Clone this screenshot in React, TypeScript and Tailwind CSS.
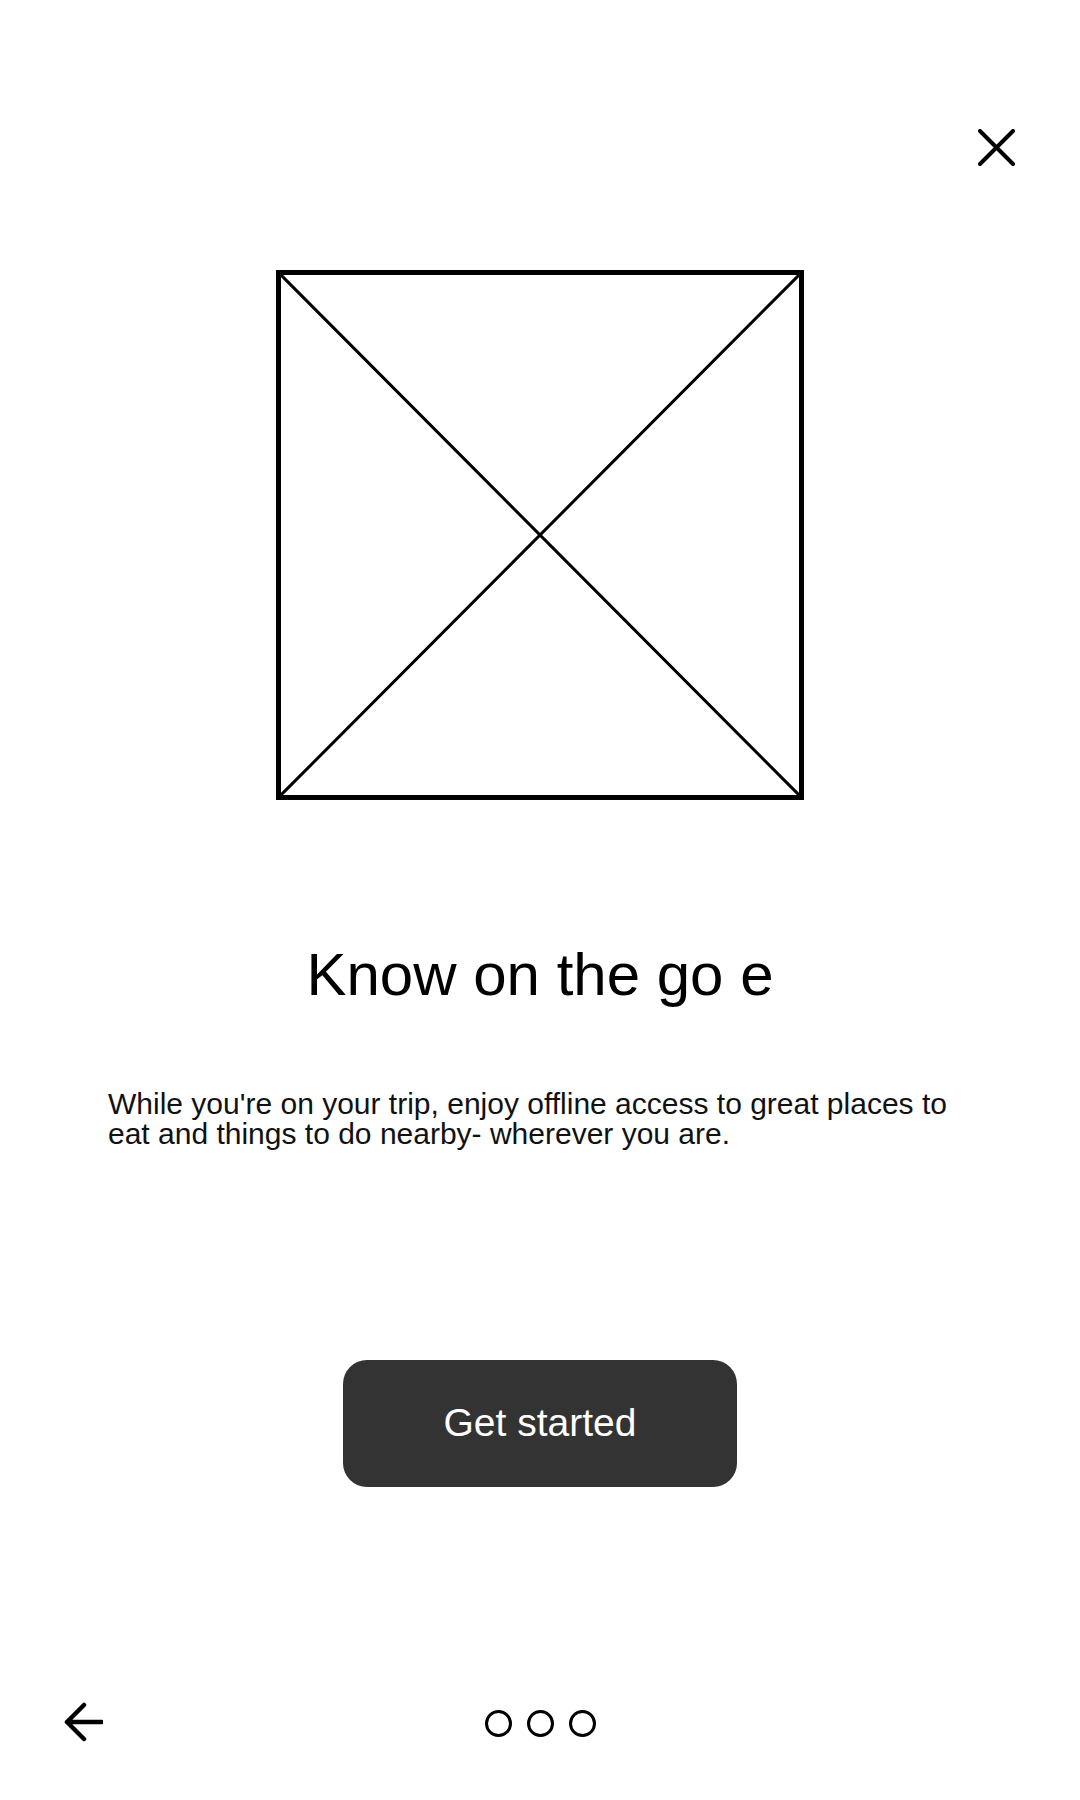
export default function App() {
  return (
    <div className="w-[1080px] h-[1800px] bg-white flex flex-col font-['Liberation_Sans',Arial,sans-serif] text-black">
      {/* Close */}
      <div className="flex justify-end pt-[129px] pr-[65px]">
        <button aria-label="Close" className="w-[37px] h-[37px]">
          <svg viewBox="0 0 37 37" width="37" height="37" fill="none" stroke="black" strokeWidth="4" strokeLinecap="round">
            <path d="M2 2 L35 35 M35 2 L2 35" />
          </svg>
        </button>
      </div>

      {/* Image placeholder */}
      <div className="relative mt-[104px] mx-auto w-[528px] h-[530px] border-[5px] border-black">
        <svg className="absolute inset-0 w-full h-full" viewBox="0 0 100 100" preserveAspectRatio="none" fill="none">
          <path d="M0 0 L100 100 M100 0 L0 100" stroke="black" strokeWidth="3" vectorEffect="non-scaling-stroke" />
        </svg>
      </div>

      {/* Title */}
      <h1 className="mt-[145px] text-center text-[60px] leading-[60px]">Know on the go e</h1>

      {/* Description */}
      <p className="mt-[84px] pl-[108px] pr-[110px] text-[30px] leading-[30px] text-[#111111]">
        While you're on your trip, enjoy offline access to great places to eat and things to do nearby- wherever you are.
      </p>

      {/* CTA */}
      <button className="mt-[211px] mx-auto w-[394px] h-[127px] rounded-[24px] bg-[#333333] text-white text-[39px]">
        Get started
      </button>

      {/* Footer */}
      <div className="mt-auto grid grid-cols-[1fr_auto_1fr] items-center h-[40px] mb-[58px]">
        <div className="pl-[63px]">
          <svg viewBox="0 0 40 40" width="40" height="40" fill="none" stroke="black" strokeWidth="4.5" strokeLinecap="round" strokeLinejoin="round">
            <path d="M4 20 H39 M21 3 L4 20 L21 37" />
          </svg>
        </div>
        <div className="flex items-center gap-[15px] pt-[2px]">
          <span className="w-[27px] h-[27px] rounded-full border-[3px] border-black" />
          <span className="w-[27px] h-[27px] rounded-full border-[3px] border-black" />
          <span className="w-[27px] h-[27px] rounded-full border-[3px] border-black" />
        </div>
        <div />
      </div>
    </div>
  );
}
